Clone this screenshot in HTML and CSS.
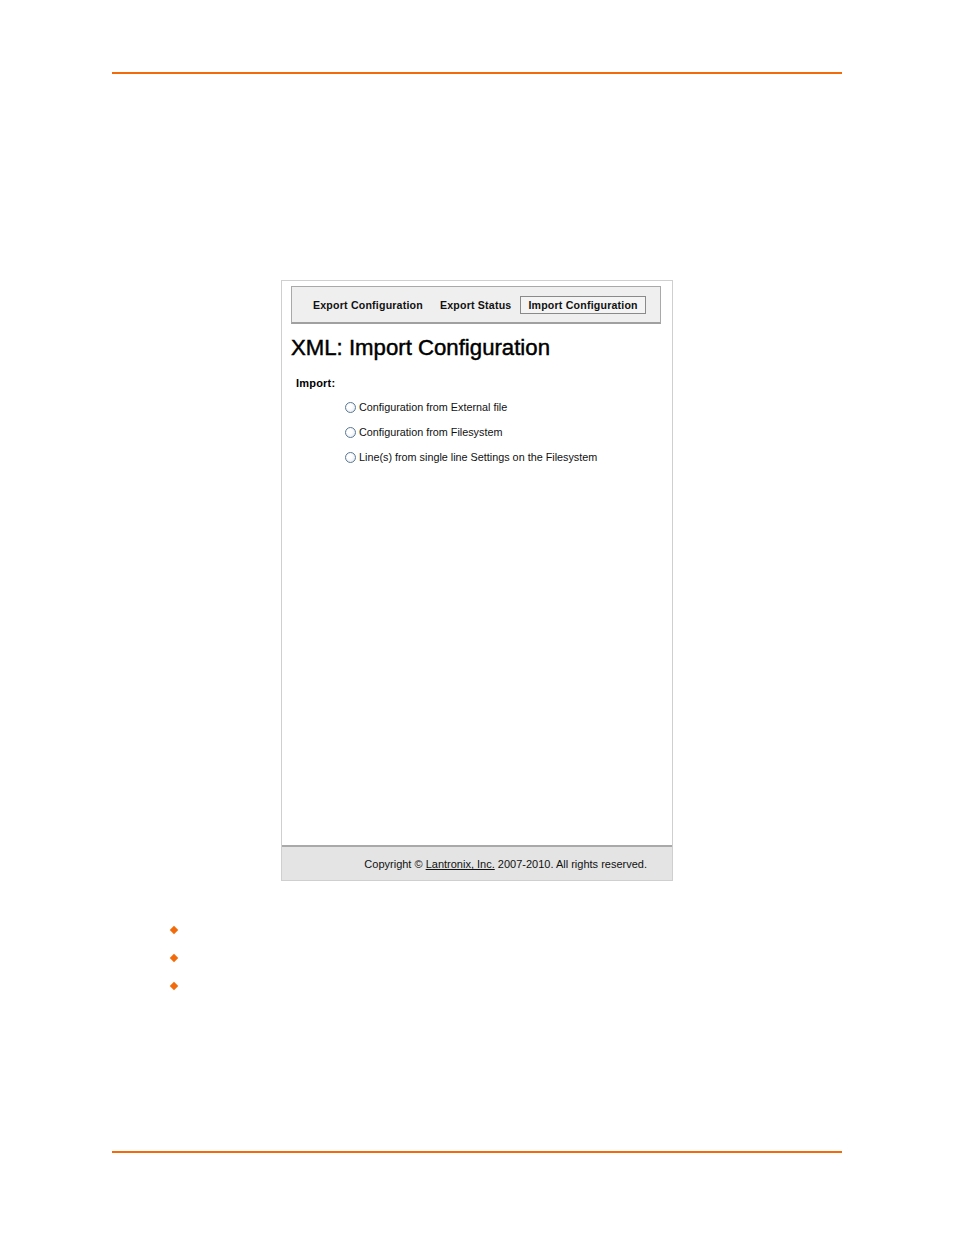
FILE: index.html
```html
<!DOCTYPE html>
<html>
<head>
<meta charset="utf-8">
<link rel="stylesheet" href="styles.css">
</head>
<body>
<div class="page">
  <div class="rule top"></div>
  <div class="shot">
    <div class="tabs">
      <span class="tab first">Export Configuration</span>
      <span class="tab second">Export Status</span>
      <span class="tab active">Import Configuration</span>
    </div>
    <h1 class="title">XML: Import Configuration</h1>
    <div class="label">Import:</div>
    <div class="options">
      <div class="opt"><span class="radio"></span>Configuration from External file</div>
      <div class="opt"><span class="radio"></span>Configuration from Filesystem</div>
      <div class="opt"><span class="radio"></span>Line(s) from single line Settings on the Filesystem</div>
    </div>
    <div class="spacer"></div>
    <div class="footer">Copyright © <span class="link">Lantronix, Inc.</span> 2007-2010. All rights reserved.</div>
  </div>
  <ul class="bullets">
    <li><span class="dia"></span></li>
    <li><span class="dia"></span></li>
    <li><span class="dia"></span></li>
  </ul>
  <div class="fill"></div>
  <div class="rule bottom"></div>
</div>
</body>
</html>
```
FILE: styles.css
```css
html, body { margin: 0; padding: 0; background: #fff; }
body { font-family: "Liberation Sans", Arial, sans-serif; color: #000; }
.page { width: 954px; height: 1235px; display: flex; flex-direction: column; }
.rule { height: 2px; background: #f26a0a; margin-left: 112px; width: 730px; }
.rule.top { margin-top: 72px; }
.shot {
  margin-top: 206px; margin-left: 281px; width: 390px; height: 599px;
  border: 1px solid #cfcfcf; display: flex; flex-direction: column;
}
.tabs {
  margin: 5px 11px 0 9px; background: #efefef;
  border: 1px solid #a9a9a9; border-bottom: 2px solid #a0a0a0;
  display: flex; align-items: center; padding-left: 21px;
  box-sizing: border-box; height: 38px; flex-shrink: 0;
}
.tab { font-size: 10.6px; font-weight: bold; color: #111; white-space: nowrap; flex-shrink: 0; line-height: 14px; letter-spacing: 0.2px; }
.tab.first { margin-right: 17px; }
.tab.second { margin-right: 9px; }
.tab.active { border: 1px solid #8a8a8a; background: #f4f4f4; padding: 1px 0 1px 7px; width: 117px; }
.title { font-size: 22.2px; font-weight: normal; -webkit-text-stroke: 0.45px #000; margin: 12px 0 0 9px; line-height: 24px; }
.label { font-size: 11px; font-weight: bold; margin: 17px 0 0 14px; letter-spacing: 0.2px; }
.options { margin: 11px 0 0 63px; display: flex; flex-direction: column; gap: 11px; }
.opt { font-size: 10.8px; display: flex; align-items: center; color: #111; height: 14px; white-space: nowrap; }
.radio {
  width: 9px; height: 9px; border-radius: 50%; border: 1px solid #5a7896;
  background: radial-gradient(circle at 40% 40%, #fff 30%, #dde3ea 100%);
  margin-right: 3px; flex-shrink: 0;
}
.spacer { flex: 1; }
.footer {
  height: 33px; background: #e4e4e4; border-top: 2px solid #a9a9a9;
  font-size: 11px; text-align: right; padding-right: 25px; line-height: 34px; color: #111; flex-shrink: 0;
}
.link { text-decoration: underline; }
.bullets { list-style: none; margin: 46px 0 0 170px; padding: 0; display: flex; flex-direction: column; gap: 18px; }
.bullets li { height: 10px; }
.dia { display: block; width: 6px; height: 6px; background: #f26a0a; transform: rotate(45deg); margin-left: 1px; }
.fill { flex: 1; }
.rule.bottom { margin-bottom: 82px; }
```
